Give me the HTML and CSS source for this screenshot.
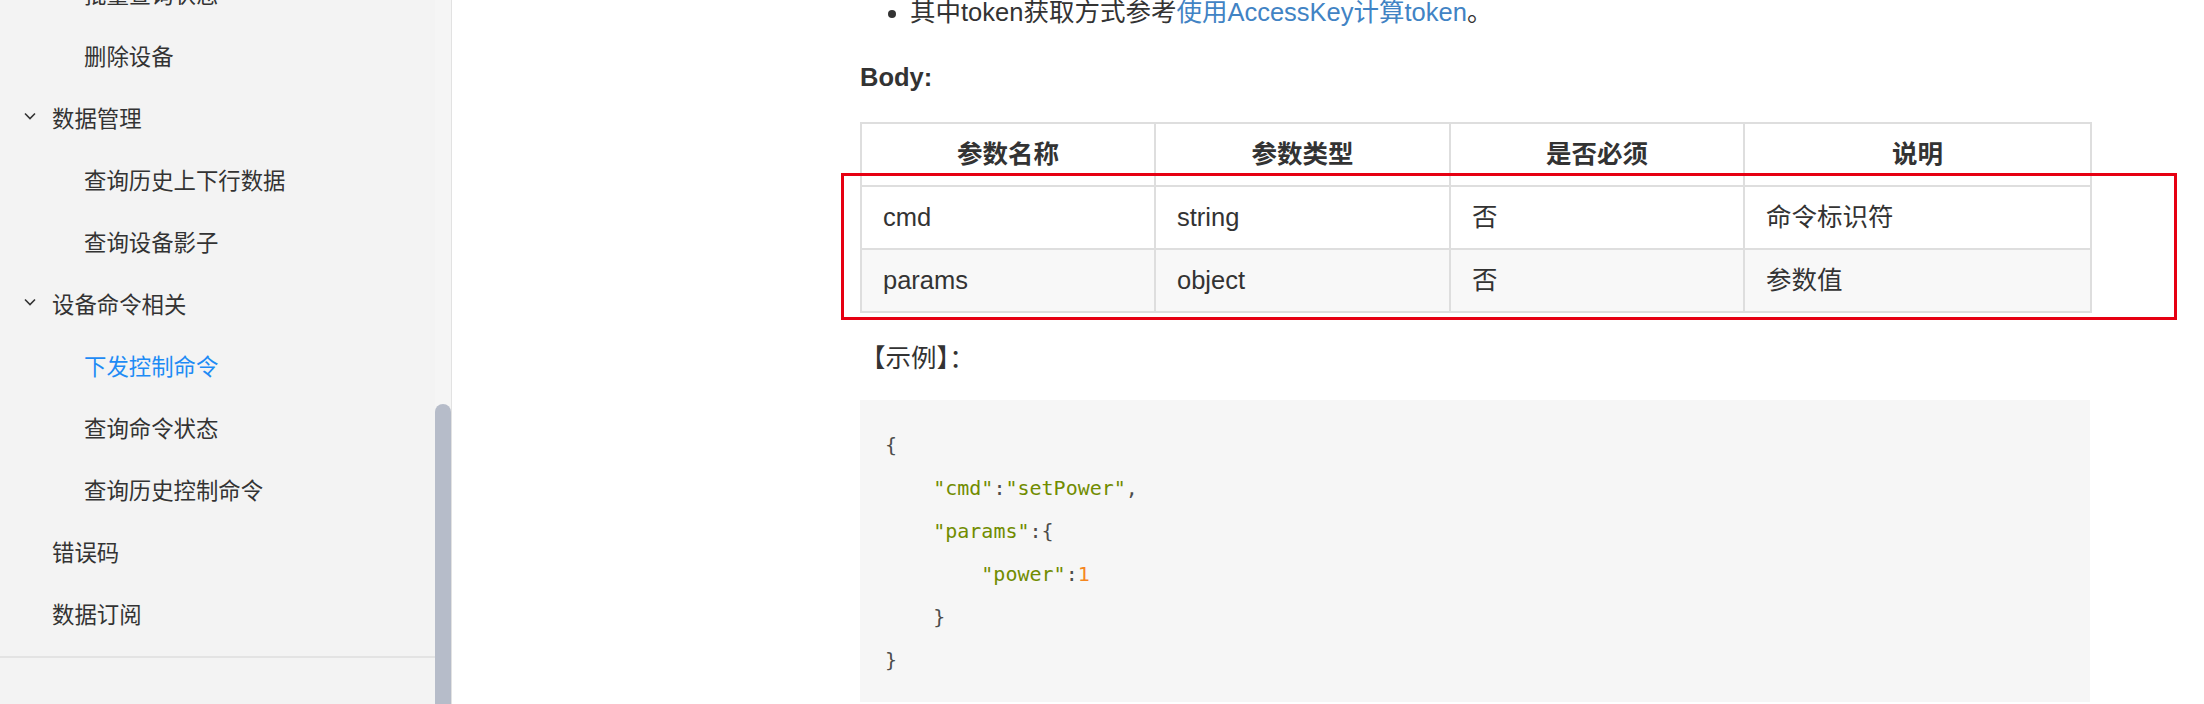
FILE: index.html
```html
<!DOCTYPE html>
<html lang="zh-CN">
<head>
<meta charset="utf-8">
<title>下发控制命令</title>
<link rel="stylesheet" href="styles.css">
</head>
<body>
<div class="page">
  <aside class="sidebar">
    <nav class="nav">
      <ul class="menu">
        <li class="item sub">批量查询状态</li>
        <li class="item sub">删除设备</li>
        <li class="item group"><svg class="chev" width="12" height="8" viewBox="0 0 12 8"><path d="M1 1.5 L6 6.5 L11 1.5" fill="none" stroke="#333" stroke-width="1.6"/></svg>数据管理</li>
        <li class="item sub">查询历史上下行数据</li>
        <li class="item sub">查询设备影子</li>
        <li class="item group"><svg class="chev" width="12" height="8" viewBox="0 0 12 8"><path d="M1 1.5 L6 6.5 L11 1.5" fill="none" stroke="#333" stroke-width="1.6"/></svg>设备命令相关</li>
        <li class="item sub active">下发控制命令</li>
        <li class="item sub">查询命令状态</li>
        <li class="item sub">查询历史控制命令</li>
        <li class="item top">错误码</li>
        <li class="item top">数据订阅</li>
      </ul>
      <div class="divider"></div>
    </nav>
    <div class="scroll-track"><div class="scroll-thumb"></div></div>
  </aside>
  <main class="main">
    <div class="doc">
      <ul class="bullets">
        <li>其中token获取方式参考<a class="link" href="#">使用AccessKey计算token</a>。</li>
      </ul>
      <p class="label">Body:</p>
      <div class="table-wrap">
        <table class="params">
          <colgroup>
            <col class="c1"><col class="c2"><col class="c3"><col class="c4">
          </colgroup>
          <thead>
            <tr><th>参数名称</th><th>参数类型</th><th>是否必须</th><th>说明</th></tr>
          </thead>
          <tbody>
            <tr><td>cmd</td><td>string</td><td>否</td><td>命令标识符</td></tr>
            <tr class="alt"><td>params</td><td>object</td><td>否</td><td>参数值</td></tr>
          </tbody>
        </table>
        <div class="highlight"></div>
      </div>
      <p class="caption">【示例】：</p>
      <pre class="code"><code>{
    <span class="s">"cmd"</span>:<span class="s">"setPower"</span>,
    <span class="s">"params"</span>:{
        <span class="s">"power"</span>:<span class="n">1</span>
    }
}</code></pre>
    </div>
  </main>
</div>
</body>
</html>
```

FILE: styles.css
```css
html, body {
  margin: 0;
  padding: 0;
  height: 704px;
  overflow: hidden;
  background: #ffffff;
}

.page {
  display: flex;
  height: 704px;
  overflow: hidden;
}

/* ---------- sidebar ---------- */
.sidebar {
  width: 451px;
  flex: none;
  display: flex;
  background: #f3f3f3;
  border-right: 1px solid #e2e2e2;
  overflow: hidden;
  font-family: "Noto Sans CJK SC", "Noto Sans", sans-serif;
}

.nav {
  width: 435px;
  flex: none;
}

.menu {
  list-style: none;
  margin: -38px 0 0;
  padding: 0;
}

.item {
  height: 62px;
  display: flex;
  align-items: center;
  font-size: 22.4px;
  color: #333333;
  white-space: nowrap;
}

.item.sub { padding-left: 84px; }
.item.group { padding-left: 24px; }
.item.top { padding-left: 52px; }

.item.active { color: #1e8bf5; }

.chev {
  width: 12px;
  height: 8px;
  margin-right: 16px;
  margin-top: -2px;
  flex: none;
}

.divider {
  margin-top: 12px;
  height: 2px;
  background: #e3e3e3;
}

.scroll-track {
  width: 16px;
  flex: none;
  background: #f5f5f5;
}

.scroll-thumb {
  margin-top: 404px;
  height: 320px;
  background: #b6bcc9;
  border-radius: 8px 8px 0 0;
}

/* ---------- main ---------- */
.main {
  flex: 1;
  padding-left: 408px;
  font-family: "Liberation Sans", "Noto Sans CJK SC", sans-serif;
  font-size: 25.5px;
  color: #333333;
}

.doc {
  width: 1230px;
}

.bullets {
  margin: -8px 0 0;
  padding-left: 50px;
  line-height: 40px;
}

.link {
  color: #4183c4;
  text-decoration: none;
}

.label {
  margin: 25px 0 25px;
  line-height: 40px;
  font-weight: bold;
}

.table-wrap {
  position: relative;
}

.params {
  width: 1230px;
  table-layout: fixed;
  border-collapse: collapse;
  border: 2px solid #dedede;
}

.c1 { width: 294px; }
.c2 { width: 295px; }
.c3 { width: 294px; }
.c4 { width: 347px; }

.params th,
.params td {
  border: 2px solid #dedede;
  padding: 13px 21px;
  line-height: 35px;
  text-align: left;
  font-weight: normal;
}

.params th {
  text-align: center;
  font-weight: bold;
}

.params tr.alt td {
  background: #f8f8f8;
}

.highlight {
  position: absolute;
  left: -19px;
  top: 51px;
  width: 1336px;
  height: 147px;
  box-sizing: border-box;
  border: 3px solid #e60012;
  pointer-events: none;
}

.caption {
  margin: 25px 0 22px;
  line-height: 40px;
}

.code {
  margin: 0;
  padding: 24px 25px 20px;
  background: #f6f6f6;
  font-family: "DejaVu Sans Mono", "Liberation Mono", monospace;
  font-size: 20px;
  line-height: 43px;
  color: #4d4d4c;
}

.code .s { color: #718c00; }
.code .n { color: #f5871f; }
```
